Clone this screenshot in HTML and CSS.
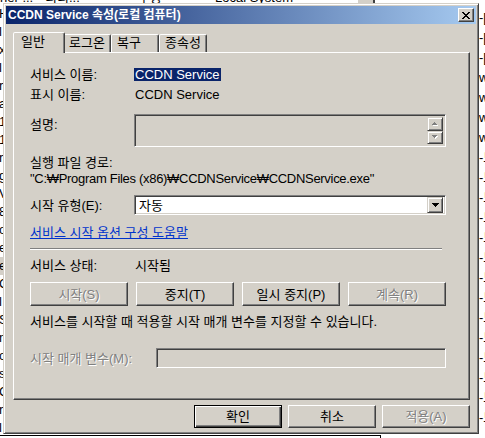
FILE: index.html
```html
<!DOCTYPE html>
<html lang="ko">
<head>
<meta charset="utf-8">
<title>CCDN Service 속성(로컬 컴퓨터)</title>
<link rel="stylesheet" href="styles.css">
</head>
<body>
<div class="desktop">
  <div class="listview">
    <div class="lv-top">
      <div class="lv-top-inner">
        <span class="lt1">ner ...</span>
        <span class="lt2">디디...</span>
        <span class="lt3">수동</span>
        <span class="lt4">Local System</span>
        <span class="lt-bar"></span>
      </div>
    </div>
    <div class="lv-mid">
      <div class="lv-left">
        <div class="ll">H</div><div class="ll">l</div><div class="ll">x</div><div class="ll">l</div>
        <div class="ll">r</div><div class="ll">a</div><div class="ll">1</div><div class="ll">1</div>
        <div class="ll">r</div><div class="ll">g</div><div class="ll">V</div><div class="ll">8</div>
        <div class="ll">o</div><div class="ll">e</div><div class="ll sel-row">e</div><div class="ll">C</div>
        <div class="ll">l</div><div class="ll">S</div><div class="ll">n</div><div class="ll">o</div>
        <div class="ll">s</div><div class="ll">C</div><div class="ll">r</div><div class="ll">l</div>
      </div>
      <div class="lv-right">
        <div class="lr">-[</div><div class="lr">-[</div><div class="lr">-[</div>
        <div class="lr">w</div><div class="lr">w</div><div class="lr">w</div><div class="lr">w</div>
        <div class="lr">-므</div><div class="lr">-므</div><div class="lr">-므</div><div class="lr">-므</div>
        <div class="lr">-므</div><div class="lr">-므</div><div class="lr">-므</div><div class="lr">-므</div>
        <div class="lr">-므</div><div class="lr">-므</div><div class="lr">-므</div><div class="lr">-므</div>
        <div class="lr">-므</div><div class="lr">-므</div>
      </div>
    </div>
    <div class="lv-bottom"><span class="lb-left"></span></div>
  </div>

  <div class="dialog">
    <div class="titlebar">
      <span class="title">CCDN Service 속성(로컬 컴퓨터)</span>
      <span class="close">
        <svg width="8" height="7" viewBox="0 0 8 7" shape-rendering="crispEdges"><path fill="#000" d="M0 0h2v1H0zM6 0h2v1H6zM1 1h2v1H1zM5 1h2v1H5zM2 2h4v1H2zM3 3h2v1H3zM2 4h4v1H2zM1 5h2v1H1zM5 5h2v1H5zM0 6h2v1H0zM6 6h2v1H6z"/></svg>
      </span>
    </div>

    <div class="tabs">
      <div class="tab active">일반</div>
      <div class="tab">로그온</div>
      <div class="tab">복구</div>
      <div class="tab">종속성</div>
    </div>

    <div class="panel">
      <div class="row r-name"><span class="label">서비스 이름:</span><span class="value sel">CCDN Service</span></div>
      <div class="row r-disp"><span class="label">표시 이름:</span><span class="value">CCDN Service</span></div>
      <div class="row r-desc">
        <span class="label">설명:</span>
        <div class="field desc">
          <div class="vscroll">
            <span class="sbtn">
              <svg width="6" height="4" viewBox="0 0 6 4" shape-rendering="crispEdges"><path fill="#fff" d="M3 1h1v1H3zM2 2h3v1H2zM1 3h5v1H1z"/><path fill="#808080" d="M2 0h1v1H2zM1 1h3v1H1zM0 2h5v1H0z"/></svg>
            </span>
            <span class="sbtn">
              <svg width="6" height="4" viewBox="0 0 6 4" shape-rendering="crispEdges"><path fill="#fff" d="M1 1h5v1H1zM2 2h3v1H2zM3 3h1v1H3z"/><path fill="#808080" d="M0 0h5v1H0zM1 1h3v1H1zM2 2h1v1H2z"/></svg>
            </span>
          </div>
        </div>
      </div>
      <div class="line r-pathlbl">실행 파일 경로:</div>
      <div class="line r-path">"C:₩Program Files (x86)₩CCDNService₩CCDNService.exe"</div>
      <div class="row r-type">
        <span class="label">시작 유형(E):</span>
        <div class="field combo">
          <span class="combo-text">자동</span>
          <span class="drop">
            <svg width="7" height="4" viewBox="0 0 7 4" shape-rendering="crispEdges"><path fill="#000" d="M0 0h7v1H0zM1 1h5v1H1zM2 2h3v1H2zM3 3h1v1H3z"/></svg>
          </span>
        </div>
      </div>
      <a class="link" href="#">서비스 시작 옵션 구성 도움말</a>
      <div class="sep"></div>
      <div class="row r-status"><span class="label">서비스 상태:</span><span class="value">시작됨</span></div>
      <div class="svc-btns">
        <span class="btn disabled">시작(S)</span>
        <span class="btn">중지(T)</span>
        <span class="btn">일시 중지(P)</span>
        <span class="btn disabled">계속(R)</span>
      </div>
      <div class="line r-hint">서비스를 시작할 때 적용할 시작 매개 변수를 지정할 수 있습니다.</div>
      <div class="row r-param">
        <span class="label wide disabled-text">시작 매개 변수(M):</span>
        <div class="field param"></div>
      </div>
    </div>

    <div class="actions">
      <span class="btn action default">확인</span>
      <span class="btn action">취소</span>
      <span class="btn action disabled">적용(A)</span>
    </div>
  </div>
</div>
</body>
</html>
```

FILE: styles.css
```css
* {
  box-sizing: border-box;
}

html,
body {
  margin: 0;
  padding: 0;
}

body {
  background: #fff;
  color: #000;
  font-family: "Liberation Sans", "Noto Sans CJK KR", sans-serif;
  font-size: 13px;
  line-height: 13px;
}

.desktop {
  position: relative;
  width: 485px;
  height: 438px;
  overflow: hidden;
}

/* ---------- background list window ---------- */
.listview {
  width: 485px;
  height: 438px;
  background: #fff;
  display: grid;
  grid-template-rows: 3px 431px 4px;
}

.lv-top {
  overflow: hidden;
}

.lv-top-inner {
  display: flex;
  margin-top: -9px;
  height: 13px;
  white-space: nowrap;
}

.lt1 { width: 45px; }
.lt2 { width: 93px; }
.lt3 { width: 77px; }
.lt4 { width: 143px; }

.lt-bar {
  width: 17px;
  height: 13px;
  background: #d4d0c8;
  border-right: 2px solid #404040;
}

.lv-mid {
  display: flex;
  justify-content: space-between;
  overflow: hidden;
}

.lv-left {
  width: 3px;
  overflow: hidden;
  padding-top: 2px;
  display: flex;
  flex-direction: column;
}

.ll {
  height: 18px;
  line-height: 18px;
  margin-left: -1px;
  white-space: nowrap;
}

.ll.sel-row {
  background: #d4d0c8;
}

.lv-right {
  width: 8px;
  padding-top: 5px;
  padding-left: 2px;
  display: flex;
  flex-direction: column;
}

.lr {
  height: 20px;
  line-height: 20px;
  white-space: nowrap;
}

.lv-bottom {
  display: flex;
}

.lb-left {
  width: 381px;
  height: 3px;
  margin-top: 1px;
  border-top: 1px solid #000;
  border-right: 1px solid #000;
}

/* ---------- dialog window ---------- */
.dialog {
  position: absolute;
  left: 3px;
  top: 3px;
  width: 476px;
  height: 431px;
  padding: 2px;
  background: #d4d0c8;
  border: 1px solid;
  border-color: #d4d0c8 #404040 #404040 #d4d0c8;
  box-shadow: inset 1px 1px #fff, inset -1px -1px #808080;
  display: flex;
  flex-direction: column;
}

.titlebar {
  height: 18px;
  flex: none;
  display: flex;
  align-items: center;
  justify-content: space-between;
  padding-left: 2px;
  background: linear-gradient(to right, #0a246a, #a6caf0);
}

.title {
  color: #fff;
  font-size: 12px;
  font-weight: bold;
  white-space: nowrap;
}

.close {
  width: 16px;
  height: 14px;
  margin-right: 2px;
  background: #d4d0c8;
  border: 1px solid;
  border-color: #fff #404040 #404040 #fff;
  box-shadow: inset -1px -1px #808080;
  display: flex;
  align-items: center;
  justify-content: center;
}

.close svg {
  display: block;
}

/* ---------- tabs ---------- */
.tabs {
  flex: none;
  display: flex;
  align-items: flex-end;
  height: 20px;
  margin-top: 8px;
  padding-left: 9px;
}

.tab {
  width: 48px;
  height: 18px;
  padding: 1px 0 0 5px;
  background: #d4d0c8;
  border: 1px solid;
  border-bottom: 0;
  border-color: #fff #404040 transparent #fff;
  border-radius: 2px 2px 0 0;
  box-shadow: inset -1px 0 #808080;
  white-space: nowrap;
}

.tab.active {
  position: relative;
  z-index: 1;
  width: 52px;
  height: 21px;
  margin: 0 -2px -1px;
  padding: 2px 0 0 7px;
}

/* ---------- panel ---------- */
.panel {
  flex: none;
  height: 348px;
  margin: 0 6px 0 7px;
  padding: 15px 23px 0 16px;
  border: 1px solid;
  border-color: #fff #404040 #404040 #fff;
  box-shadow: inset -1px -1px #808080;
  display: flex;
  flex-direction: column;
}

.row {
  display: flex;
  align-items: center;
}

.line {
  height: 13px;
  white-space: nowrap;
}

.label {
  width: 104px;
  flex: none;
  white-space: nowrap;
}

.label.wide {
  width: 126px;
}

.value {
  padding-left: 1px;
  white-space: nowrap;
}

.value.sel {
  background: #0a246a;
  color: #fff;
  padding: 0 1px;
}

.r-name { height: 13px; }
.r-disp { height: 13px; margin-top: 7px; }

.r-desc {
  margin-top: 13px;
  align-items: flex-start;
}

.r-desc .label {
  padding-top: 4px;
}

.field {
  border: 1px solid;
  border-color: #808080 #fff #fff #808080;
  box-shadow: inset 1px 1px #404040, inset -1px -1px #d4d0c8;
}

.desc {
  width: 312px;
  height: 33px;
  padding: 2px;
  background: #d4d0c8;
  display: flex;
  justify-content: flex-end;
}

.vscroll {
  width: 16px;
  display: flex;
  flex-direction: column;
}

.sbtn {
  flex: 1;
  background: #d4d0c8;
  border: 1px solid;
  border-color: #d4d0c8 #404040 #404040 #d4d0c8;
  box-shadow: inset 1px 1px #fff, inset -1px -1px #808080;
  display: flex;
  align-items: center;
  justify-content: center;
}

.sbtn svg,
.drop svg {
  display: block;
}

.r-pathlbl { margin-top: 9px; }

.r-path {
  margin-top: 3px;
  letter-spacing: -0.3px;
}

.r-type {
  margin-top: 10px;
}

.combo {
  width: 312px;
  height: 20px;
  padding: 2px;
  background: #fff;
  display: flex;
  align-items: center;
}

.combo-text {
  flex: 1;
  padding-left: 2px;
}

.drop {
  width: 16px;
  height: 16px;
  background: #d4d0c8;
  border: 1px solid;
  border-color: #d4d0c8 #404040 #404040 #d4d0c8;
  box-shadow: inset 1px 1px #fff, inset -1px -1px #808080;
  display: flex;
  align-items: center;
  justify-content: center;
}

.link {
  align-self: flex-start;
  height: 13px;
  margin-top: 11px;
  color: #0033cc;
  text-decoration: underline;
  white-space: nowrap;
}

.sep {
  height: 2px;
  margin: 9px 4px 0 0;
  border-top: 1px solid #808080;
  border-bottom: 1px solid #fff;
}

.r-status {
  height: 13px;
  margin-top: 9px;
}

.svc-btns {
  margin-top: 10px;
  display: grid;
  grid-template-columns: repeat(4, 1fr);
  gap: 8px;
}

.btn {
  height: 24px;
  background: #d4d0c8;
  border: 1px solid;
  border-color: #fff #404040 #404040 #fff;
  box-shadow: inset -1px -1px #808080;
  display: flex;
  align-items: center;
  justify-content: center;
  white-space: nowrap;
}

.btn.disabled,
.disabled-text {
  color: #808080;
  text-shadow: 1px 1px 0 #fff;
}

.r-hint {
  margin-top: 9px;
}

.r-param {
  margin-top: 20px;
}

.param {
  width: 290px;
  height: 20px;
  background: #d4d0c8;
}

/* ---------- dialog buttons ---------- */
.actions {
  flex: none;
  display: flex;
  justify-content: flex-end;
  gap: 6px;
  margin: 5px 6px 0 0;
}

.btn.action {
  width: 88px;
  height: 23px;
}

.btn.default {
  border-color: #000;
  box-shadow: inset 1px 1px #fff, inset -1px -1px #404040, inset -2px -2px #808080;
}
```
